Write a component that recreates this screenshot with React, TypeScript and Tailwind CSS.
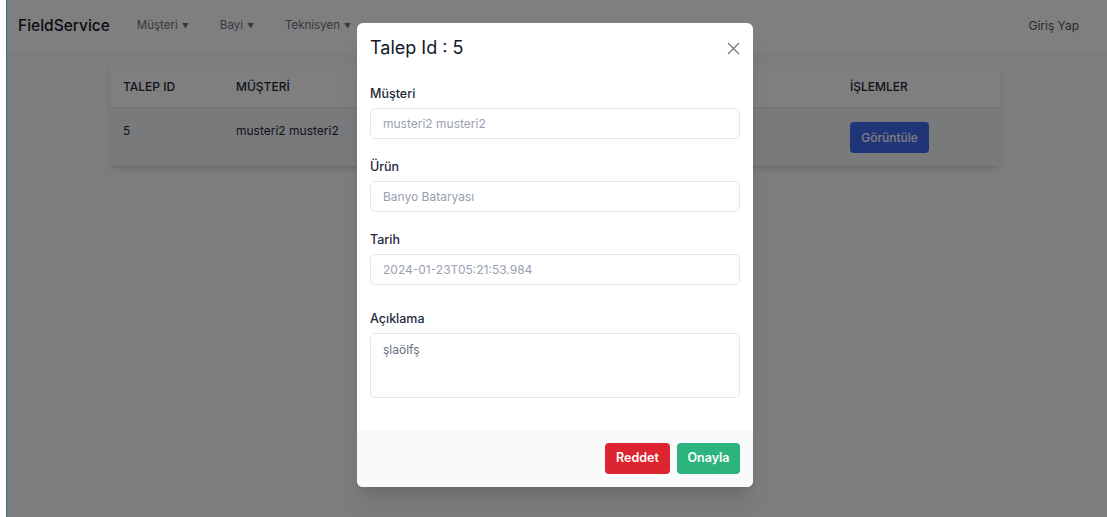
import React from "react";
import { X } from "lucide-react";

const fields = [
  { label: "Müşteri", value: "musteri2 musteri2" },
  { label: "Ürün", value: "Banyo Bataryası" },
  { label: "Tarih", value: "2024-01-23T05:21:53.984" },
];

const NavMenu = ({ label }: { label: string }) => (
  <button className="flex items-center gap-[4px] text-[11.5px] text-gray-500">
    {label}
    <span className="text-[7px] leading-none">▼</span>
  </button>
);

const App = () => {
  return (
    <div
      className="flex h-[517px] w-full overflow-hidden bg-white"
      style={{ fontFamily: "Inter, 'Noto Sans', sans-serif" }}
    >
      <div className="w-[6px] shrink-0 bg-white" />
      <div className="w-px shrink-0 bg-[#3b6b80]" />

      <div className="relative flex-1 bg-gray-50">
        {/* navbar */}
        <nav className="flex h-[52px] items-center bg-white pl-[11px] pr-[28px]">
          <span className="text-[15.5px] font-medium text-gray-900">FieldService</span>
          <div className="ml-[27px] flex items-center gap-[31px]">
            <NavMenu label="Müşteri" />
            <NavMenu label="Bayi" />
            <NavMenu label="Teknisyen" />
          </div>
          <span className="ml-auto text-[12px] text-gray-600">Giriş Yap</span>
        </nav>

        {/* talep table */}
        <div className="ml-[103px] mt-[13px] w-[890px] bg-white shadow-md">
          <div className="grid h-[43px] grid-cols-[126px_205px_205px_204px_150px] items-center border-b border-gray-200 pt-[2px] text-[12px] font-medium text-gray-800">
            <div className="pl-[13px]">TALEP ID</div>
            <div>MÜŞTERİ</div>
            <div>ÜRÜN</div>
            <div>TARİH</div>
            <div>İŞLEMLER</div>
          </div>
          <div className="grid h-[58px] grid-cols-[126px_205px_205px_204px_150px] items-start bg-gray-100 pt-[14px] text-[12px] leading-[18px] text-gray-800">
            <div className="pl-[13px]">5</div>
            <div>musteri2 musteri2</div>
            <div>Banyo Bataryası</div>
            <div>2024-01-23</div>
            <div>
              <button className="h-[31px] w-[79px] rounded-[4px] bg-[#4068f0] text-[12px] font-medium text-white">
                Görüntüle
              </button>
            </div>
          </div>
        </div>

        {/* modal backdrop */}
        <div className="absolute inset-0 bg-black/50" />

        {/* modal */}
        <div className="absolute left-[350px] top-[23px] w-[396px] overflow-hidden rounded-[6px] bg-white shadow-xl">
          <div className="flex items-center justify-between px-[13px] pt-[13px]">
            <h2 className="text-[18px] leading-[24px] text-gray-900">Talep Id : 5</h2>
            <X className="-mr-[4px] h-[21px] w-[21px] text-gray-500" strokeWidth={1.3} />
          </div>

          <div className="px-[13px] pt-[25px]">
            {fields.map((f, i) => (
              <div key={f.label} className={i > 0 ? "mt-[19px]" : ""}>
                <label className="block text-[12.5px] font-medium leading-[18px] text-gray-800">
                  {f.label}
                </label>
                <input
                  disabled
                  value={f.value}
                  className="mt-[5px] h-[31px] w-full rounded-[5px] border border-gray-200 bg-white px-[12px] text-[12px] text-gray-400"
                />
              </div>
            ))}
            <div className="mt-[25px]">
              <label className="block text-[12.5px] font-medium leading-[18px] text-gray-800">
                Açıklama
              </label>
              <textarea
                disabled
                value="şlaölfş"
                className="mt-[5px] block h-[65px] w-full resize-none rounded-[5px] border border-gray-200 bg-white px-[12px] py-[7px] text-[12px] text-gray-500"
              />
            </div>
          </div>

          <div className="mt-[32px] flex h-[57px] items-center justify-end gap-[7px] bg-gray-50 px-[13px]">
            <button className="h-[31px] w-[65px] rounded-[4px] bg-[#dc2530] text-[12.5px] font-semibold text-white">
              Reddet
            </button>
            <button className="h-[31px] w-[63px] rounded-[4px] bg-[#2db47e] text-[12.5px] font-semibold text-white">
              Onayla
            </button>
          </div>
        </div>
      </div>
    </div>
  );
};

export default App;
